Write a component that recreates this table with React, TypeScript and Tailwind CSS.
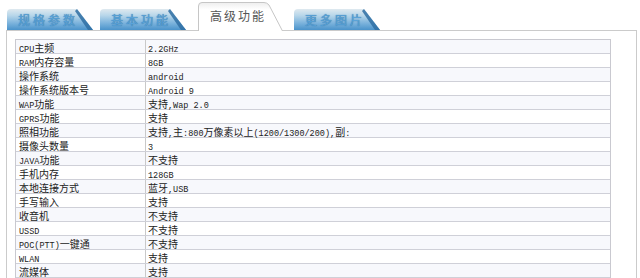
import React from 'react';

const rows: [string, string][] = [
  ['CPU主频', '2.2GHz'],
  ['RAM内存容量', '8GB'],
  ['操作系统', 'android'],
  ['操作系统版本号', 'Android 9'],
  ['WAP功能', '支持,Wap 2.0'],
  ['GPRS功能', '支持'],
  ['照相功能', '支持,主:800万像素以上(1200/1300/200),副:'],
  ['摄像头数量', '3'],
  ['JAVA功能', '不支持'],
  ['手机内存', '128GB'],
  ['本地连接方式', '蓝牙,USB'],
  ['手写输入', '支持'],
  ['收音机', '不支持'],
  ['USSD', '不支持'],
  ['POC(PTT)一键通', '不支持'],
  ['WLAN', '支持'],
  ['流媒体', '支持'],
];

// latin runs in a narrow mono face, CJK runs a bit larger, like the old SimSun page
const Mixed = ({ text }: { text: string }) => {
  const parts = text.split(/([\x00-\x7f]+)/).filter(Boolean);
  return (
    <>
      {parts.map((p, i) =>
        /^[\x00-\x7f]+$/.test(p) ? (
          <span key={i} className="font-['Liberation_Mono',monospace] text-[8.5px] whitespace-pre">
            {p}
          </span>
        ) : (
          <span key={i} className="font-['Noto_Sans_CJK_SC',sans-serif] text-[10px]">
            {p}
          </span>
        )
      )}
    </>
  );
};

const BlueTab = ({ label, ml, id }: { label: string; ml: string; id: string }) => (
  <div className={`relative w-[86px] h-[21px] ${ml} flex items-center pl-[11px]`}>
    <svg className="absolute inset-0" width="86" height="21" viewBox="0 0 86 21">
      <defs>
        <linearGradient id={id} x1="0" y1="0" x2="0" y2="1">
          <stop offset="0" stopColor="#dfe9ef" />
          <stop offset="0.3" stopColor="#b9d7ea" />
          <stop offset="0.65" stopColor="#7fb5dd" />
          <stop offset="1" stopColor="#4a93cb" />
        </linearGradient>
      </defs>
      <path d="M0 21 V4 Q0 0 4 0 H70 L86 21 Z" fill={`url(#${id})`} />
      <path d="M70 0 L86 21 L81 21 L68 2 Z" fill="#2f6fa3" opacity="0.85" />
    </svg>
    <span className="relative text-[12px] tracking-[3px] text-[#5aa3d8] font-['Noto_Sans_CJK_SC',sans-serif] [text-shadow:0_0_1px_#1f5f95]">
      {label}
    </span>
  </div>
);

const ActiveTab = ({ label }: { label: string }) => (
  <div className="relative z-10 w-[85px] h-[29px] ml-[12px] mb-[-1px] flex items-center pl-[12px] pb-[2px]">
    <svg className="absolute inset-0" width="85" height="29" viewBox="0 0 85 29">
      <defs>
        <linearGradient id="act" x1="0" y1="0" x2="0" y2="1">
          <stop offset="0" stopColor="#eeeeee" />
          <stop offset="0.25" stopColor="#ffffff" />
          <stop offset="1" stopColor="#ffffff" />
        </linearGradient>
      </defs>
      <path d="M0.5 29 V4 Q0.5 0.5 4 0.5 H66 Q69 0.5 71 3 L84.5 29 Z" fill="url(#act)" />
      <path d="M0.5 29 V4 Q0.5 0.5 4 0.5 H66 Q69 0.5 71 3 L84.5 29" fill="none" stroke="#c6c6c6" />
    </svg>
    <span className="relative text-[12px] tracking-[2px] text-[#555] font-['Noto_Sans_CJK_SC',sans-serif]">
      {label}
    </span>
  </div>
);

export default function App() {
  return (
    <div className="w-[640px] h-[278px] bg-white overflow-hidden">
      {/* Tabs */}
      <div className="flex items-end h-[30px] pl-[7px]">
        <BlueTab label="规格参数" ml="" id="g1" />
        <BlueTab label="基本功能" ml="ml-[7px]" id="g2" />
        <ActiveTab label="高级功能" />
        <BlueTab label="更多图片" ml="ml-[11px]" id="g4" />
      </div>

      {/* Panel */}
      <div className="ml-[6px] w-[631px] h-[260px] border border-[#cbcbcb] pl-[8px] pt-[8px]">
        <div className="w-[596px] border-t border-l border-r border-[#c9c9d0]">
          {rows.map(([k, v], i) => (
            <div
              key={k}
              className={`flex h-[14px] border-b border-[#cfd0d8] text-[#222] leading-[13px] ${
                i % 2 === 0 ? 'bg-[#f7f8fc]' : 'bg-white'
              }`}
            >
              <div className="w-[130px] shrink-0 border-r border-[#c9c9c9] pl-[3px] whitespace-nowrap">
                <Mixed text={k} />
              </div>
              <div className="flex-1 pl-[2px] whitespace-nowrap">
                <Mixed text={v} />
              </div>
            </div>
          ))}
        </div>
      </div>
    </div>
  );
}
